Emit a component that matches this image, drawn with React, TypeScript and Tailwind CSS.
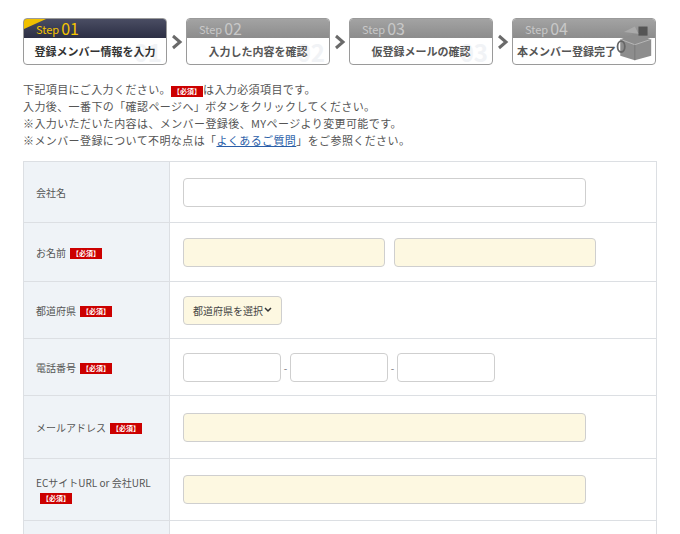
const font = { fontFamily: '"Noto Sans CJK JP", "Noto Sans", sans-serif' };

function Req() {
  return (
    <span className="inline-block bg-[#cc0000] text-white text-[7px] leading-[11px] px-[2px] ml-1 align-middle font-bold">
      【必須】
    </span>
  );
}

const steps = [
  { n: "01", label: "登録メンバー情報を入力", active: true },
  { n: "02", label: "入力した内容を確認" },
  { n: "03", label: "仮登録メールの確認" },
  { n: "04", label: "本メンバー登録完了" },
];

function Step({ n, label, active }: { n: string; label: string; active?: boolean }) {
  return (
    <div className="w-[144px] h-[47px] rounded-[4px] border border-[#9a9a9a] overflow-hidden flex flex-col bg-white relative">
      <div
        className={`h-[19px] flex items-end px-3 ${active ? "bg-gradient-to-b from-[#4a4d63] to-[#2c2f44]" : "bg-gradient-to-b from-[#a3a3a3] to-[#8c8c8c]"}`}
      >
        {active && <div className="absolute left-0 top-0 w-0 h-0 border-t-[10px] border-t-[#f0c000] border-r-[22px] border-r-transparent" />}
        <span className={`relative text-[11px] leading-[18px] ${active ? "text-[#f5c400]" : "text-[#c8c8c8]"}`}>Step</span>
        <span className={`relative text-[16px] leading-[19px] ml-[2px] ${active ? "text-[#f5c400]" : "text-[#c8c8c8]"}`}>{n}</span>
      </div>
      <div className={`flex-1 flex items-center relative ${n === "04" ? "justify-start pl-1" : "justify-center"}`}>
        {n !== "04" && (
          <span className="absolute right-1 top-[2px] text-[24px] font-bold text-[#f1f3f6] leading-none">{n}</span>
        )}
        <span className={`relative whitespace-nowrap text-[11px] font-bold ${active ? "text-[#333]" : "text-[#555]"}`}>{label}</span>
      </div>
      {n === "04" && (
        <svg className="absolute right-[2px] top-[3px]" width="40" height="40" viewBox="0 0 44 42">
          <path d="M8 18 L24 12 L42 18 L42 36 L24 41 L8 36 Z" fill="#8d8d8d" />
          <path d="M8 18 L24 24 L42 18" fill="none" stroke="#bbb" />
          <path d="M24 24 L24 41" stroke="#777" />
          <rect x="28" y="4" width="10" height="10" fill="#555" />
          <path d="M12 10 L24 4 L28 12 Z" fill="#aaa" />
          <ellipse cx="9" cy="26" rx="4" ry="6" fill="none" stroke="#666" strokeWidth="2" />
        </svg>
      )}
    </div>
  );
}

function Arrow() {
  return (
    <svg width="19" height="20" viewBox="0 0 19 20">
      <path d="M6 4 L13 10 L6 16" fill="none" stroke="#6a6a6a" strokeWidth="3" />
    </svg>
  );
}

function Row({ label, req, children, h }: { label: React.ReactNode; req?: boolean; children?: React.ReactNode; h: string }) {
  return (
    <div className={`flex border-b border-[#dcdfe3] ${h}`}>
      <div className="w-[146px] bg-[#eff3f7] border-r border-[#dcdfe3] flex items-center px-3 text-[10px] text-[#555]">
        <div>{label}{req && <Req />}</div>
      </div>
      <div className="flex-1 flex items-center px-[13px] gap-[9px]">{children}</div>
    </div>
  );
}

const inp = "h-[29px] border border-[#cfcfcf] rounded-[4px]";

function Dash() {
  return <span className="w-[9px] text-center text-[10px] text-[#777]">-</span>;
}

export default function App() {
  return (
    <div className="w-[680px] h-[534px] bg-white overflow-hidden" style={font}>
      <div className="flex items-center pl-[23px] pt-[18px]">
        {steps.map((s, i) => (
          <div key={s.n} className="flex items-center">
            {i > 0 && <Arrow />}
            <Step {...s} />
          </div>
        ))}
      </div>
      <div className="pl-[23px] mt-[16px] text-[11px] leading-[17px] text-[#555] tracking-[0.4px]">
        <p>下記項目にご入力ください。<span className="inline-block bg-[#cc0000] text-white text-[7px] leading-[11px] px-[2px] font-bold align-middle tracking-normal">【必須】</span>は入力必須項目です。</p>
        <p>入力後、一番下の「確認ページへ」ボタンをクリックしてください。</p>
        <p>※入力いただいた内容は、メンバー登録後、MYページより変更可能です。</p>
        <p>※メンバー登録について不明な点は「<a className="text-[#2a5ea8] underline">よくあるご質問</a>」をご参照ください。</p>
      </div>
      <div className="mx-[23px] mt-[12px] border border-[#dcdfe3] border-b-0">
        <Row label="会社名" h="h-[61px]">
          <div className={`${inp} w-[403px] bg-white`} />
        </Row>
        <Row label="お名前" req h="h-[59px]">
          <div className={`${inp} w-[202px] bg-[#fdf8e1]`} />
          <div className={`${inp} w-[202px] bg-[#fdf8e1]`} />
        </Row>
        <Row label="都道府県" req h="h-[57px]">
          <div className={`${inp} w-[99px] bg-[#fdf8e1] flex items-center justify-between px-[9px] text-[10px] text-[#444]`}>
            都道府県を選択
            <svg width="8" height="6" viewBox="0 0 8 6"><path d="M1 1 L4 4 L7 1" fill="none" stroke="#333" strokeWidth="1.5" /></svg>
          </div>
        </Row>
        <Row label="電話番号" req h="h-[57px]">
          <div className="flex items-center">
            <div className={`${inp} w-[98px] bg-white`} />
            <Dash />
            <div className={`${inp} w-[98px] bg-white`} />
            <Dash />
            <div className={`${inp} w-[98px] bg-white`} />
          </div>
        </Row>
        <Row label="メールアドレス" req h="h-[63px]">
          <div className={`${inp} w-[403px] bg-[#fdf8e1]`} />
        </Row>
        <Row label={<>ECサイトURL or 会社URL<br /></>} req h="h-[62px]">
          <div className={`${inp} w-[403px] bg-[#fdf8e1]`} />
        </Row>
        <Row label="" h="h-[40px]" />
      </div>
    </div>
  );
}
